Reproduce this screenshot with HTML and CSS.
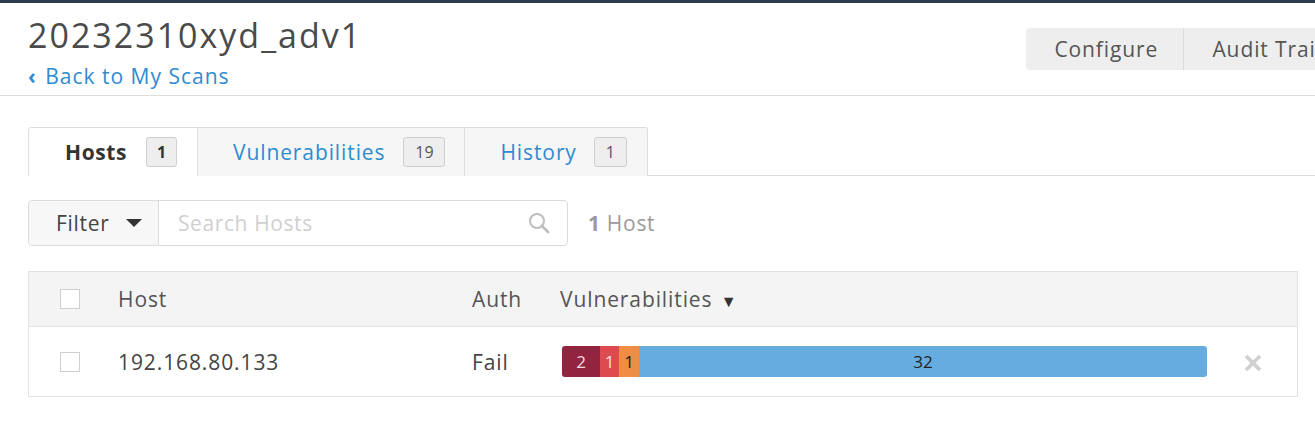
FILE: index.html
```html
<!DOCTYPE html>
<html lang="en">
<head>
<meta charset="utf-8">
<title>20232310xyd_adv1</title>
<link rel="stylesheet" href="styles.css">
</head>
<body>
<div class="topline"></div>
<header class="head">
  <div class="head-inner">
    <div class="head-left">
      <h1 class="title">20232310xyd_adv1</h1>
      <a class="back" href="#"><span class="back-arrow">‹</span> Back to My Scans</a>
    </div>
    <div class="head-buttons">
      <button class="hbtn">Configure</button>
      <button class="hbtn">Audit Trail</button>
    </div>
  </div>
</header>
<main class="content">
  <nav class="tabs">
    <div class="tab active"><span class="tab-label">Hosts</span><span class="badge">1</span></div>
    <div class="tab"><span class="tab-label">Vulnerabilities</span><span class="badge wide">19</span></div>
    <div class="tab"><span class="tab-label">History</span><span class="badge">1</span></div>
  </nav>
  <div class="filter-row">
    <div class="filter-group">
      <button class="filter-btn">Filter <span class="caret"></span></button>
      <div class="search">
        <span class="placeholder">Search Hosts</span>
        <svg class="search-icon" width="24" height="24" viewBox="0 0 24 24"><circle cx="10" cy="10" r="7" fill="none" stroke="#bdbdbd" stroke-width="2"/><line x1="15" y1="15" x2="21" y2="21" stroke="#bdbdbd" stroke-width="2.6" stroke-linecap="round"/></svg>
      </div>
    </div>
    <div class="count"><b>1</b> Host</div>
  </div>
  <div class="grid">
    <div class="row header">
      <div class="cell check"><span class="cbox"></span></div>
      <div class="cell">Host</div>
      <div class="cell">Auth</div>
      <div class="cell">Vulnerabilities <span class="sort">▼</span></div>
      <div class="cell"></div>
    </div>
    <div class="row body">
      <div class="cell check"><span class="cbox"></span></div>
      <div class="cell">192.168.80.133</div>
      <div class="cell">Fail</div>
      <div class="cell">
        <div class="bar">
          <span class="seg crit" style="width:38px">2</span>
          <span class="seg high" style="width:19px">1</span>
          <span class="seg med" style="width:20px">1</span>
          <span class="seg info">32</span>
        </div>
      </div>
      <div class="cell remove">
        <svg width="20" height="20" viewBox="0 0 20 20"><line x1="3" y1="3" x2="17" y2="17" stroke="#d0d0d0" stroke-width="3.8"/><line x1="17" y1="3" x2="3" y2="17" stroke="#d0d0d0" stroke-width="3.8"/></svg>
      </div>
    </div>
  </div>
</main>
</body>
</html>
```

FILE: styles.css
```css
* { box-sizing: border-box; }
html, body { margin: 0; padding: 0; }
body {
  font-family: "Open Sans", "Liberation Sans", sans-serif;
  color: #444;
  background: #fff;
  overflow: hidden;
  width: 1315px;
}
.topline { height: 3px; background: #2b3c4d; }
.head { border-bottom: 1px solid #dedede; }
.head-inner {
  display: flex;
  justify-content: space-between;
  align-items: flex-start;
  padding-left: 28px;
  margin-right: -33px;
  height: 92px;
}
.head-left { display: flex; flex-direction: column; }
.title {
  margin: 12px 0 0 0;
  font-size: 34px;
  line-height: 40px;
  font-weight: 400;
  letter-spacing: 2px;
  color: #4a4a4a;
}
.back {
  margin-top: 9px;
  font-size: 21px;
  line-height: 24px;
  letter-spacing: 1px;
  color: #2f8bd0;
  text-decoration: none;
}
.back-arrow { font-weight: 700; margin-right: 2px; }
.head-buttons { display: flex; margin-top: 25px; }
.hbtn {
  height: 42px;
  border: 0;
  background: #eeeeee;
  font-family: inherit;
  font-size: 21px;
  letter-spacing: 0.9px;
  color: #555;
  padding: 0 26px 0 28px;
  white-space: nowrap;
}
.hbtn:first-child { border-radius: 4px 0 0 4px; border-right: 1px solid #dadada; width: 158px; }
.content { padding: 0 17px 0 28px; }
.tabs {
  display: flex;
  margin-top: 31px;
  border-bottom: 1px solid #dedede;
  margin-right: -17px;
  height: 49px;
}
.tab {
  display: flex;
  align-items: center;
  height: 49px;
  padding: 0 19px 0 35px;
  background: #f6f6f6;
  border: 1px solid #dedede;
  border-left: 0;
  border-bottom: 0;
  font-size: 21px;
  letter-spacing: 0.9px;
  color: #2f8bd0;
}
.tab.active {
  background: #fff;
  border-left: 1px solid #dedede;
  color: #333;
  font-weight: 700;
  height: 49px;
  margin-bottom: -1px;
  padding-left: 36px;
  width: 170px;
  border-radius: 3px 0 0 0;
  letter-spacing: 0.6px;
}
.tab:last-child { border-radius: 0 3px 0 0; padding-right: 20px; }
.tab-label { margin-right: 18px; }
.tab:nth-child(3) .tab-label { margin-right: 17px; }
.tab.active .tab-label { margin-right: 19px; }
.badge {
  display: inline-flex;
  align-items: center;
  justify-content: center;
  width: 31px;
  height: 30px;
  border: 1px solid #cfcfcf;
  border-radius: 3px;
  background: #eeeeee;
  font-size: 16px;
  font-weight: 400;
  color: #555;
  letter-spacing: 0;
}
.tab:last-child .badge { width: 33px; }
.tab.active .badge { font-weight: 700; color: #333; }
.badge.wide { width: 42px; }
.filter-row {
  display: flex;
  align-items: center;
  margin-top: 24px;
}
.filter-group {
  display: flex;
  height: 46px;
  border: 1px solid #dcdcdc;
  border-radius: 4px;
  width: 540px;
}
.filter-btn {
  width: 130px;
  border: 0;
  border-right: 1px solid #dcdcdc;
  background: #f7f7f7;
  border-radius: 4px 0 0 4px;
  font-family: inherit;
  font-size: 21px;
  letter-spacing: 0.7px;
  color: #444;
  padding: 0 0 0 27px;
  text-align: left;
  display: flex;
  align-items: center;
}
.caret {
  display: inline-block;
  margin-left: 16px;
  width: 0; height: 0;
  border-left: 8px solid transparent;
  border-right: 8px solid transparent;
  border-top: 8px solid #333;
}
.search {
  flex: 1;
  display: flex;
  align-items: center;
  justify-content: space-between;
  padding: 0 16px 0 19px;
}
.placeholder { font-size: 21px; letter-spacing: 0.6px; color: #d0d0d0; }
.count {
  margin-left: 20px;
  font-size: 21px;
  letter-spacing: 0.7px;
  color: #9a9a9a;
}
.count b { font-weight: 700; color: #9a9a9a; }
.grid {
  margin-top: 25px;
  border: 1px solid #e2e2e2;
}
.row {
  display: grid;
  grid-template-columns: 89px 354px 88px 655px 1fr;
  align-items: center;
}
.row.header {
  height: 55px;
  background: #f4f4f4;
  border-bottom: 1px solid #e2e2e2;
  color: #555;
}
.row.body { height: 69px; color: #444; }
.cell { font-size: 21px; letter-spacing: 0.9px; white-space: nowrap; }
.check { padding-left: 31px; display: flex; align-items: center; }
.cbox {
  display: inline-block;
  width: 20px; height: 20px;
  border: 1px solid #cfcfcf;
  background: #fff;
}
.sort { font-size: 16px; margin-left: 2px; color: #333; }
.bar {
  display: flex;
  height: 31px;
  margin-left: 2px;
  width: 645px;
  border-radius: 3px;
  overflow: hidden;
}
.seg {
  display: flex;
  align-items: center;
  justify-content: center;
  font-size: 17px;
  letter-spacing: 0;
  height: 100%;
}
.crit { background: #91243e; color: #f3dbe0; }
.high { background: #dd4b50; color: #fbe0e0; }
.med { background: #f18c43; color: #222; }
.info { background: #67acdf; color: #222; flex: 1; }
.remove { display: flex; justify-content: center; padding-right: 6px; padding-top: 2px; }
```
